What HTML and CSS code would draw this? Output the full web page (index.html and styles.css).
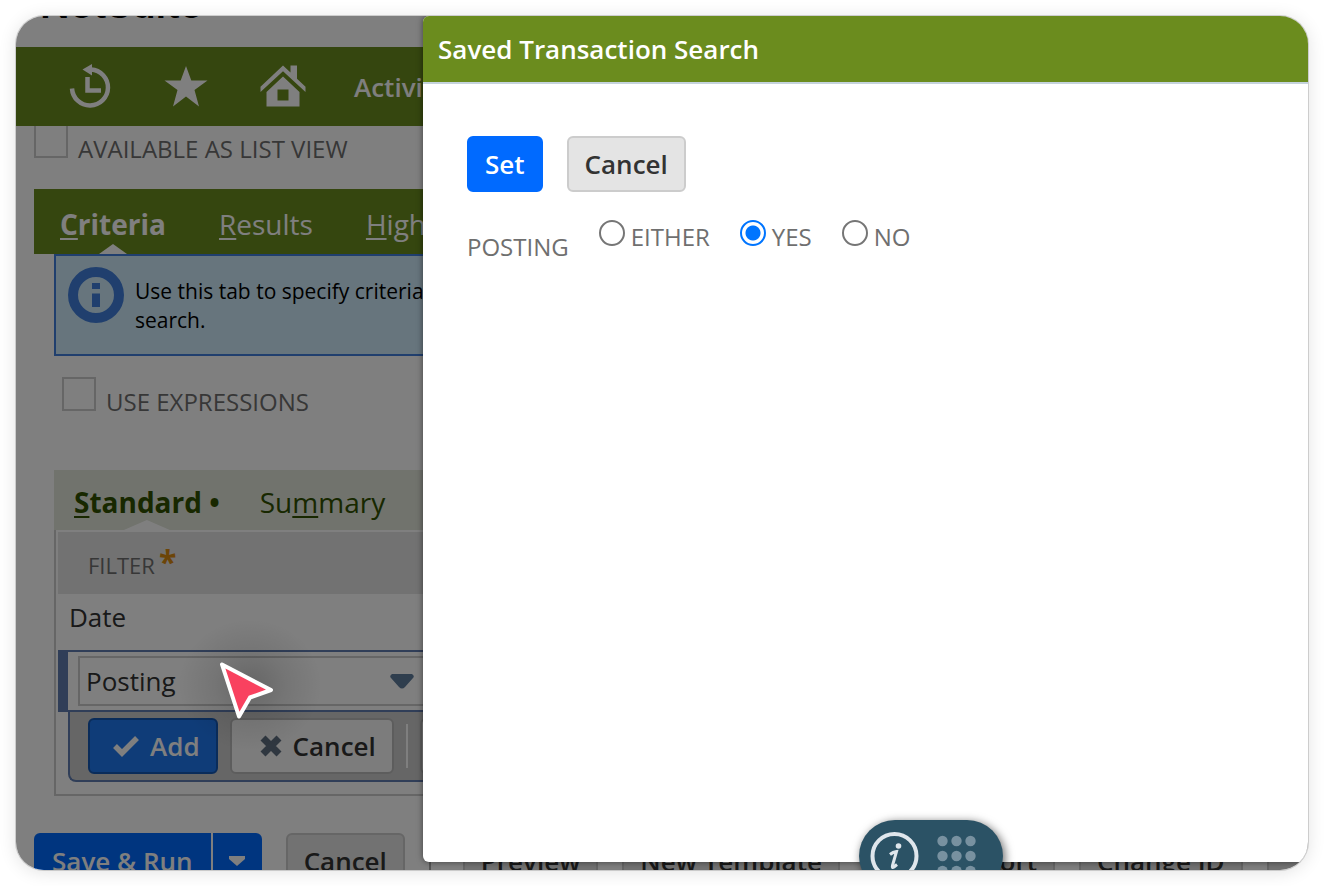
FILE: index.html
```html
<!DOCTYPE html>
<html lang="en">
<head>
<meta charset="utf-8">
<title>Saved Transaction Search</title>
<link rel="stylesheet" href="styles.css">
</head>
<body>
<div class="frame">
  <div class="page">
    <header class="brand">NetSuite</header>
    <nav class="nav">
      <a href="#" aria-label="Recent records"><svg width="44" height="46" viewBox="0 0 44 46"><path d="M4 24.500A18 18 0 1 0 23 5.500" fill="none" stroke="#fff" stroke-width="4.500"/><path d="M14.500 5.500L24 0v11.500z" fill="#fff"/><path d="M19.500 13v13.500H33" fill="none" stroke="#fff" stroke-width="4.500"/></svg></a>
      <a href="#" aria-label="Shortcuts"><svg width="44" height="46" viewBox="0 0 44 46"><path d="M22 2l5.300 14.500h16.200L30.500 26l4.500 16.500-13-10-13 10L13.500 26 .5 16.500h16.200z" fill="#fff"/></svg></a>
      <a href="#" aria-label="Home"><svg width="46" height="46" viewBox="0 0 46 46"><path d="M23 1.500l7.500 7v-7h6.500v13.200l8.500 8v5.300L23 7.200.5 28v-5.300z" fill="#fff"/><path d="M23 12.500L39.500 28v14.500h-33V28zM17.500 25.500v11h11v-11z" fill="#fff" fill-rule="evenodd"/></svg></a>
      <a href="#" class="nav-text">Activities</a>
    </nav>
    <main class="content">
      <label class="check check-top"><input type="checkbox"><span>AVAILABLE AS LIST VIEW</span></label>
      <div class="tabs">
        <a href="#" class="tab active"><u>C</u>riteria</a>
        <a href="#" class="tab"><u>R</u>esults</a>
        <a href="#" class="tab"><u>H</u>ighlighting</a>
      </div>
      <section class="criteria">
        <div class="info">
          <svg width="56" height="56" viewBox="0 0 56 56"><circle cx="28" cy="28" r="23" fill="none" stroke="#417fdc" stroke-width="10"/><path d="M24 16h8v6h-8zM24 26.500h8V40h-8z" fill="#417fdc"/></svg>
          <p>Use this tab to specify criteria for this<br>search.</p>
        </div>
        <label class="check check-use"><input type="checkbox"><span>USE EXPRESSIONS</span></label>
        <div class="subtabs">
          <a href="#" class="subtab active"><u>S</u>tandard •</a>
          <a href="#" class="subtab">Su<u>m</u>mary</a>
        </div>
        <div class="panel">
          <table class="filters">
            <thead><tr><th>FILTER<span class="required">*</span></th></tr></thead>
            <tbody>
              <tr><td class="value">Date</td></tr>
              <tr><td class="editing">
                <div class="picker">
                  <select aria-label="Filter"><option>Posting</option></select>
                  <svg width="24" height="15" viewBox="0 0 24 15"><path d="M2 0h20q3 2 1 4l-8 9q-3 3-6 0L1 4Q-1 2 2 0z" fill="#5f7c9c"/></svg>
                </div>
              </td></tr>
            </tbody>
          </table>
          <div class="row-actions">
            <button class="btn add"><svg width="26" height="22" viewBox="0 0 26 22"><path d="M2 11l7 7L24 3" fill="none" stroke="#fff" stroke-width="5.500"/></svg>Add</button>
            <button class="btn light"><svg width="22" height="22" viewBox="0 0 22 22"><path d="M3 3l16 16M19 3L3 19" stroke="#5f6e80" stroke-width="7"/></svg>Cancel</button>
            <span class="divider"></span>
            <button class="btn light">Insert</button>
          </div>
        </div>
      </section>
      <footer class="actions">
        <div class="split"><button class="btn primary">Save &amp; Run</button><button class="btn primary more" aria-label="More save options"><svg width="16" height="10" viewBox="0 0 16 10"><path d="M0 0h16v3L8 10 0 3z" fill="#fff"/></svg></button></div>
        <button class="btn">Cancel</button>
        <span class="bar"></span>
        <button class="btn">Preview</button>
        <button class="btn">New Template</button>
        <button class="btn export">Export</button>
        <button class="btn">Change ID</button>
        <button class="btn last" aria-label="More actions"></button>
      </footer>
    </main>
  </div>
  <div class="shade"></div>
  <svg class="pointer" width="240" height="200" viewBox="0 0 240 200"><defs><radialGradient id="glow"><stop offset="0" stop-opacity=".2"/><stop offset=".5" stop-opacity=".08"/><stop offset="1" stop-opacity="0"/></radialGradient></defs><ellipse cx="140" cy="116" rx="72" ry="66" fill="url(#glow)"/><path d="M112 95.500L161 121 140 128.500 129 147.500z" fill="#f9415f" stroke="#fff" stroke-width="4" stroke-linejoin="round"/></svg>
  <section class="dialog" role="dialog" aria-labelledby="dialog-title">
    <h1 id="dialog-title">Saved Transaction Search</h1>
    <form class="form">
      <div class="form-actions">
        <button type="button" class="btn primary">Set</button>
        <button type="button" class="btn">Cancel</button>
      </div>
      <div class="posting" role="radiogroup" aria-labelledby="posting-label">
        <span class="posting-label" id="posting-label">POSTING</span>
        <label class="radio"><input type="radio" name="posting"><span>EITHER</span></label>
        <label class="radio"><input type="radio" name="posting" checked><span>YES</span></label>
        <label class="radio"><input type="radio" name="posting"><span>NO</span></label>
      </div>
    </form>
  </section>
  <div class="widget">
    <svg width="144" height="72" viewBox="0 0 144 72"><circle cx="35.500" cy="36" r="22" fill="none" stroke="#dfe6ec" stroke-width="4"/><circle cx="39.500" cy="26" r="2.800" fill="#dfe6ec"/><path d="M31 34.500q3-2.500 6.500-3l-4 14q-.8 3 1.500 1.500l3-2.500" fill="none" stroke="#dfe6ec" stroke-width="3"/><g fill="#7891a0"><circle cx="83.500" cy="21" r="5.200"/><circle cx="97.500" cy="21" r="5.200"/><circle cx="111.500" cy="21" r="5.200"/><circle cx="83.500" cy="36" r="5.200"/><circle cx="97.500" cy="36" r="5.200"/><circle cx="111.500" cy="36" r="5.200"/><circle cx="83.500" cy="51" r="5.200"/><circle cx="97.500" cy="51" r="5.200"/><circle cx="111.500" cy="51" r="5.200"/></g></svg>
  </div>
</div>
</body>
</html>
```
FILE: styles.css
```css
* { box-sizing: border-box; }
body {
  margin: 0;
  padding: 16px;
  background: #fff;
  font: 26px/36px "Open Sans", sans-serif;
  color: #333;
}
a { color: inherit; text-decoration: none; }
svg { display: block; flex: none; }
input { appearance: none; flex: none; margin: 0; background: #fff; }
u { text-decoration-thickness: 2px; text-underline-offset: 3px; }

.frame {
  position: relative;
  height: calc(100vh - 32px);
  overflow: hidden;
  border-radius: 28px;
  box-shadow: 0 0 0 1px rgba(0, 0, 0, .15), 0 2px 18px rgba(0, 0, 0, .12);
}
.page { height: 100%; overflow: hidden; isolation: isolate; background: #fff; }
.shade { position: absolute; inset: 0; background: rgba(0, 0, 0, .5); }

.brand {
  display: flex;
  align-items: flex-end;
  height: 31px;
  padding: 0 24px 24px;
  font: 600 39px/38px Inter, sans-serif;
  color: #000;
}
.nav {
  position: relative;
  z-index: 1;
  display: flex;
  align-items: center;
  gap: 52px;
  height: 79px;
  padding: 0 52px;
  background: #6b8c1e;
  color: #fff;
}
.nav-text { margin-left: -4px; font-weight: 600; }

.content { padding-left: 18px; }
.check { display: flex; align-items: flex-end; gap: 10px; font-size: 24px; line-height: 26px; color: #6f6f6f; }
.check input { width: 34px; height: 34px; border: 2px solid #ccc; }
.check-top { height: 32px; }
.check-use { padding: 21px 0 0 8px; }
.check span { position: relative; top: 4px; }

.tabs {
  display: flex;
  gap: 53px;
  height: 65px;
  margin-top: 31px;
  padding: 0 26px;
  background: #6b8c1e;
  color: #fff;
  font-size: 28px;
  line-height: 70px;
}
.tab, .subtab { position: relative; white-space: nowrap; }
.active { font-weight: bold; }
.active::after {
  content: "";
  position: absolute;
  left: 50%;
  bottom: 0;
  width: 28px;
  height: 10px;
  margin-left: -14px;
  background: #fff;
  clip-path: polygon(50% 0, 100% 100%, 0 100%);
}

.criteria { padding-left: 20px; }
.info {
  display: flex;
  gap: 11px;
  height: 102px;
  padding: 11px 12px;
  border: 2px solid #417fdc;
  background: #cfebfa;
  color: #000;
}
.info p { margin: 10px 0 0; font-size: 21px; line-height: 29px; white-space: nowrap; }

.subtabs {
  display: flex;
  gap: 40px;
  height: 60px;
  margin-top: 59px;
  padding: 0 20px;
  background: #e2e6da;
  color: #305000;
  font-size: 28px;
  line-height: 64px;
}
.subtab.active::after { width: 46px; margin-left: -23px; }

.panel { height: 266px; padding: 2px; border: 2px solid #ccc; border-top: 0; }
.filters { width: 100%; border-collapse: separate; border-spacing: 0; }
.filters th {
  height: 62px;
  padding: 4px 30px 0;
  background: #e5e5e5;
  color: #6f6f6f;
  font-size: 22px;
  font-weight: normal;
  line-height: 30px;
  text-align: left;
}
.required { padding-left: 4px; color: #d98a10; font-size: 32px; font-weight: bold; line-height: 20px; }
.filters td { padding: 0; }
.filters .value { height: 56px; padding: 0 0 10px 11px; }
.filters .editing {
  height: 62px;
  padding-left: 10px;
  border: solid #617db0;
  border-width: 2px 0 2px 10px;
}
.picker { position: relative; width: 352px; }
.picker select {
  display: block;
  width: 100%;
  height: 50px;
  padding: 0 6px;
  appearance: none;
  border: 2px solid #ccc;
  background: #fff;
  color: #333;
  font: inherit;
}
.picker svg { position: absolute; right: 16px; top: 18px; }
.row-actions {
  display: flex;
  align-items: center;
  gap: 12px;
  height: 70px;
  margin-left: 10px;
  padding: 0 18px;
  border: solid #617db0;
  border-width: 0 0 2px 2px;
  border-radius: 0 0 0 8px;
  background: #ccc;
}
.divider { width: 2px; height: 44px; background: #fff; }

.btn {
  display: flex;
  align-items: center;
  justify-content: center;
  gap: 11px;
  flex: none;
  height: 56px;
  padding: 0 16px;
  border: 2px solid #ccc;
  border-radius: 6px;
  background: #e4e4e4;
  color: #333;
  font: 600 26px/36px "Open Sans", sans-serif;
}
.primary { border-color: #006aff; background: #006aff; color: #fff; }
.add { padding: 0 16px 0 23px; border-color: #1558b5; background: #1f79f0; color: #fff; }
.light { padding-left: 28px; border-color: #bbb; background: #f8f8f8; }

.actions { display: flex; gap: 24px; margin-top: 37px; overflow: hidden; }
.split { display: flex; flex: none; gap: 2px; }
.split .btn:first-child { border-radius: 6px 0 0 6px; }
.split .more { width: 49px; border-radius: 0 6px 6px 0; }
.bar { flex: none; width: 2px; margin-right: 8px; background: #aaa; }
.export { width: 191px; justify-content: flex-end; }
.last { width: 80px; }

.pointer { position: absolute; left: 94px; top: 553px; }

.dialog {
  position: absolute;
  inset: 0 0 8px 407px;
  overflow: hidden;
  border-radius: 6px;
  background: #fff;
  box-shadow: 0 0 6px rgba(0, 0, 0, .5);
}
.dialog h1 {
  margin: 0;
  padding: 15px;
  border-bottom: 2px solid #c5d3dc;
  background: #6b8c1e;
  color: #fff;
  font-size: 26px;
  font-weight: 600;
  line-height: 36px;
}
.form { padding: 52px 44px; }
.form-actions { display: flex; gap: 24px; }
.posting { display: flex; margin-top: 26px; font-size: 24px; line-height: 38px; color: #6f6f6f; }
.posting-label { margin: 10px 30px 0 0; }
.radio { display: flex; gap: 6px; margin-right: 30px; }
.radio input { width: 26px; height: 26px; margin-top: 2px; border: 2px solid #767676; border-radius: 50%; }
.radio input:checked { border-color: #0075ff; background: radial-gradient(circle, #0075ff 7px, #fff 8px); }

.widget {
  position: absolute;
  left: 843px;
  bottom: -22px;
  border-radius: 36px;
  background: #2b5265;
  box-shadow: 2px 2px 10px rgba(0, 0, 0, .6);
}
```
